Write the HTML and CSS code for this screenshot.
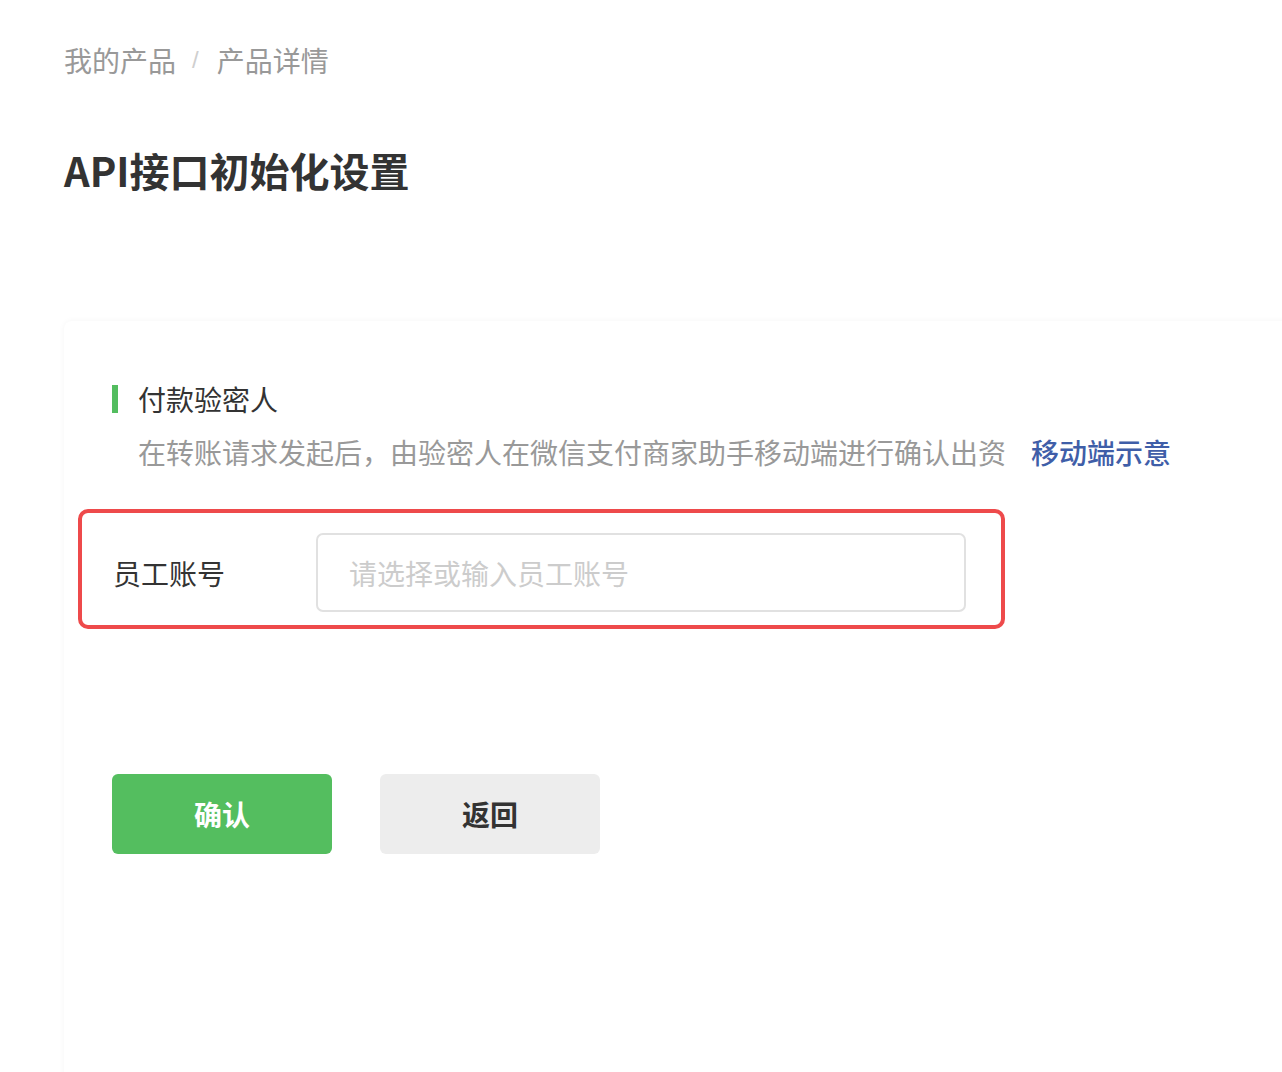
FILE: index.html
```html
<!DOCTYPE html>
<html lang="zh-CN">
<head>
<meta charset="utf-8">
<title>API接口初始化设置</title>
<link rel="stylesheet" href="styles.css">
</head>
<body>
<div class="page">
  <nav class="breadcrumb">
    <span class="crumb">我的产品</span>
    <span class="sep">/</span>
    <span class="crumb">产品详情</span>
  </nav>
  <h1 class="title">API接口初始化设置</h1>
  <section class="card">
    <div class="section-head">
      <span class="bar"></span>
      <span class="section-title">付款验密人</span>
    </div>
    <p class="desc">在转账请求发起后，由验密人在微信支付商家助手移动端进行确认出资<a class="link" href="#">移动端示意</a></p>
    <div class="form-row">
      <label class="label">员工账号</label>
      <input class="input" type="text" placeholder="请选择或输入员工账号">
    </div>
    <div class="actions">
      <button class="btn btn-primary">确认</button>
      <button class="btn btn-default">返回</button>
    </div>
  </section>
</div>
</body>
</html>
```
FILE: styles.css
```css
html, body {
  margin: 0;
  padding: 0;
  background: #ffffff;
  overflow: hidden;
}
body {
  font-family: "Noto Sans CJK SC", "Noto Sans", sans-serif;
  color: #333333;
}
.page {
  padding: 40px 0 0 64px;
}
.breadcrumb {
  display: flex;
  align-items: center;
  font-size: 28px;
  line-height: 40px;
  height: 40px;
  color: #999999;
}
.sep {
  color: #cfcfcf;
  margin: 0 18px 0 16px;
  font-family: "Liberation Sans", sans-serif;
  font-size: 24px;
}
.title {
  margin: 62px 0 0 0;
  font-size: 40px;
  line-height: 56px;
  font-weight: 700;
  color: #333333;
}
.card {
  margin: 123px -60px 0 0;
  padding: 58px 0 0 48px;
  min-height: 760px;
  background: #ffffff;
  border-radius: 8px;
  box-shadow: 0 0 6px rgba(0, 0, 0, 0.045);
}
.section-head {
  display: flex;
  align-items: center;
  height: 40px;
}
.bar {
  width: 6px;
  height: 28px;
  background: #53bd5f;
  margin-right: 20px;
}
.section-title {
  font-size: 28px;
  line-height: 40px;
  color: #333333;
}
.desc {
  margin: 13px 0 0 26px;
  font-size: 28px;
  line-height: 40px;
  color: #999999;
}
.link {
  margin-left: 25px;
  color: #3f5ea8;
  font-weight: 500;
  text-decoration: none;
}
.form-row {
  display: flex;
  align-items: center;
  box-sizing: border-box;
  width: 927px;
  margin: 37px 0 0 -34px;
  padding: 20px 33px 13px 31px;
  border: 4px solid #ee4a4b;
  border-radius: 10px;
}
.label {
  width: 203px;
  flex: none;
  font-size: 28px;
  line-height: 40px;
  color: #333333;
}
.input {
  box-sizing: border-box;
  width: 650px;
  height: 79px;
  padding: 0 31px;
  border: 2px solid #e1e1e1;
  border-radius: 7px;
  font-family: "Noto Sans CJK SC", sans-serif;
  font-size: 28px;
  color: #333333;
  outline: none;
}
.input::placeholder {
  color: #cccccc;
}
.actions {
  display: flex;
  gap: 48px;
  margin-top: 145px;
}
.btn {
  width: 220px;
  height: 80px;
  border: none;
  border-radius: 6px;
  font-family: "Noto Sans CJK SC", sans-serif;
  font-size: 28px;
  font-weight: 700;
  cursor: pointer;
}
.btn-primary {
  background: #54be5f;
  color: #ffffff;
}
.btn-default {
  background: #ededed;
  color: #333333;
}
```
